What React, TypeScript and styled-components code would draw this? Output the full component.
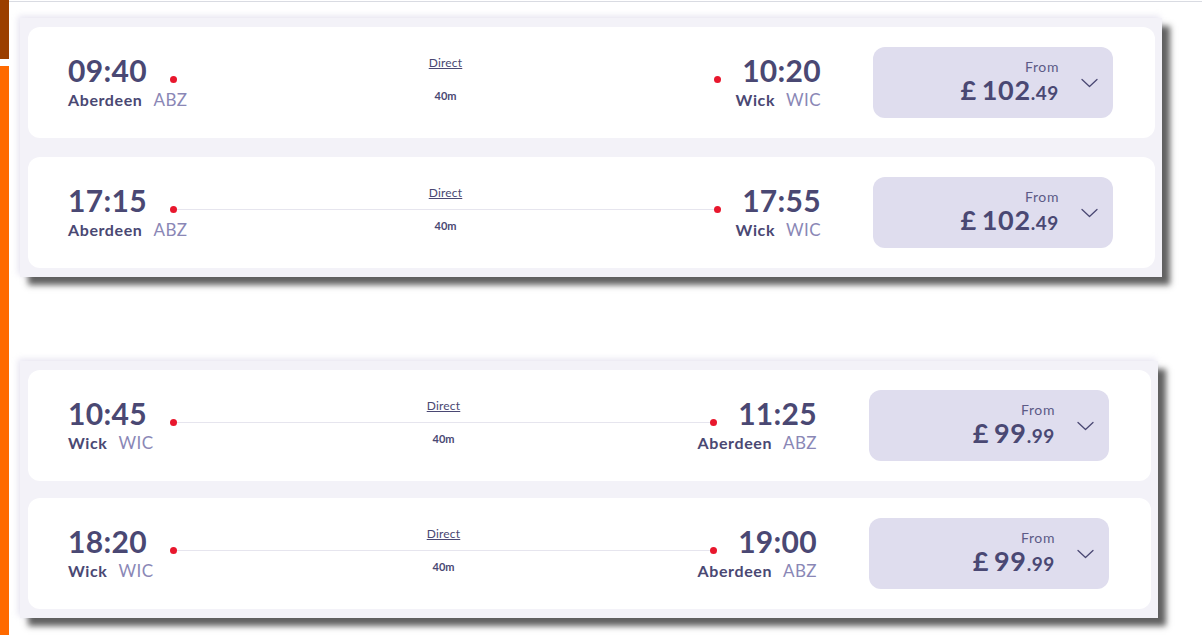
import React from 'react';
import styled, { createGlobalStyle } from 'styled-components';

type Journey = {
    depTime: string
    depName: string
    depCode: string
    arrTime: string
    arrName: string
    arrCode: string
    duration: string
    pounds: string
    pence: string
    showLine: boolean
}

const GlobalStyle = createGlobalStyle`
    html, body {
        margin: 0;
        padding: 0;
        background: #ffffff;
        font-family: Lato, "Open Sans", Arial, sans-serif;
        color: #4a4873;
    }
`;

const Page = styled.div`
    display: flex;
    width: 1202px;
    height: 635px;
    overflow: hidden;
`;

const SideBar = styled.div`
    width: 9px;
    display: flex;
    flex-direction: column;
    flex-shrink: 0;
`;

const SideTop = styled.div`
    height: 59px;
    background: #9b3f00;
`;

const SideGap = styled.div`
    height: 7px;
    background: #ffffff;
`;

const SideBottom = styled.div`
    flex: 1;
    background: #ff6a00;
`;

const Main = styled.div`
    flex: 1;
    margin-top: 1px;
    border-top: 1px solid #d9dbe2;
    padding: 16px 0 0 11px;
    display: flex;
    flex-direction: column;
    gap: 84px;
`;

const Panel = styled.div<{ $width: number, $gap: number }>`
    width: ${p => p.$width}px;
    box-sizing: border-box;
    padding: 9px 7px 9px 8px;
    background: #f3f2f8;
    display: flex;
    flex-direction: column;
    gap: ${p => p.$gap}px;
    box-shadow: 8px 8px 6px rgba(30, 30, 30, 0.7), -2px -2px 6px rgba(225, 223, 238, 0.8);
`;

const Card = styled.div`
    height: 111px;
    box-sizing: border-box;
    background: #ffffff;
    border-radius: 12px;
    padding: 0 42px 0 40px;
    display: grid;
    grid-template-columns: 102px 1fr 100px 292px;
    align-items: center;
`;

const Stop = styled.div<{ $align: 'left' | 'right' }>`
    display: flex;
    flex-direction: column;
    align-items: ${p => p.$align === 'left' ? 'flex-start' : 'flex-end'};
    white-space: nowrap;
    margin-bottom: 3px;
`;

const Time = styled.div`
    font-size: 30px;
    line-height: 34px;
    font-weight: 700;
    color: #4a4873;
    letter-spacing: 0.3px;
`;

const Station = styled.div`
    margin-top: 3px;
    font-size: 16px;
    line-height: 20px;
    display: flex;
    gap: 11px;
`;

const StationName = styled.span`
    font-weight: 700;
    letter-spacing: 0.6px;
    color: #4a4873;
`;

const StationCode = styled.span`
    font-size: 17px;
    color: #8a87b6;
    letter-spacing: 0.4px;
`;

const Timeline = styled.div`
    display: flex;
    flex-direction: column;
    align-items: center;
    margin-bottom: 7px;
`;

const DirectLink = styled.a`
    font-size: 12px;
    line-height: 16px;
    color: #4a4873;
    text-decoration: underline;
    letter-spacing: 0.2px;
`;

const Track = styled.div`
    align-self: stretch;
    height: 7px;
    margin: 5px 0;
    display: flex;
    align-items: center;
`;

const Dot = styled.span`
    width: 7px;
    height: 7px;
    border-radius: 50%;
    background: #e8172d;
    flex-shrink: 0;
`;

const Line = styled.span<{ $visible: boolean }>`
    flex: 1;
    height: 1px;
    background: ${p => p.$visible ? '#e6e5ee' : 'transparent'};
`;

const Duration = styled.div`
    font-size: 11px;
    line-height: 16px;
    font-weight: 700;
    color: #4a4873;
`;

const PriceBox = styled.button`
    justify-self: end;
    width: 240px;
    height: 71px;
    border: none;
    border-radius: 12px;
    background: #dfddee;
    display: flex;
    align-items: center;
    justify-content: flex-end;
    gap: 22px;
    padding: 0 15px 0 0;
    font-family: inherit;
    cursor: pointer;
`;

const PriceText = styled.div`
    display: flex;
    flex-direction: column;
    align-items: flex-end;
    margin-top: 2px;
`;

const FromLabel = styled.span`
    font-size: 14px;
    line-height: 16px;
    color: #5c5a86;
    letter-spacing: 0.6px;
`;

const Amount = styled.span`
    font-size: 27px;
    line-height: 30px;
    font-weight: 700;
    color: #4a4873;
    letter-spacing: 0.6px;
`;

const Currency = styled.span`
    margin-right: 5px;
`;

const Pence = styled.span`
    font-size: 19px;
`;

const Chevron = () => (
    <svg width="17" height="10" viewBox="0 0 17 10" fill="none">
        <path d="M1 1.5 L8.5 8.5 L16 1.5" stroke="#4a4873" strokeWidth="1.3" strokeLinecap="round" strokeLinejoin="round" />
    </svg>
);

const outbound: Journey[] = [
    { depTime: "09:40", depName: "Aberdeen", depCode: "ABZ", arrTime: "10:20", arrName: "Wick", arrCode: "WIC", duration: "40m", pounds: "102", pence: ".49", showLine: false },
    { depTime: "17:15", depName: "Aberdeen", depCode: "ABZ", arrTime: "17:55", arrName: "Wick", arrCode: "WIC", duration: "40m", pounds: "102", pence: ".49", showLine: true },
];

const inbound: Journey[] = [
    { depTime: "10:45", depName: "Wick", depCode: "WIC", arrTime: "11:25", arrName: "Aberdeen", arrCode: "ABZ", duration: "40m", pounds: "99", pence: ".99", showLine: true },
    { depTime: "18:20", depName: "Wick", depCode: "WIC", arrTime: "19:00", arrName: "Aberdeen", arrCode: "ABZ", duration: "40m", pounds: "99", pence: ".99", showLine: true },
];

const JourneyCard: React.FC<{ journey: Journey }> = ({ journey }) => (
    <Card>
        <Stop $align="left">
            <Time>{journey.depTime}</Time>
            <Station>
                <StationName>{journey.depName}</StationName>
                <StationCode>{journey.depCode}</StationCode>
            </Station>
        </Stop>
        <Timeline>
            <DirectLink>Direct</DirectLink>
            <Track>
                <Dot />
                <Line $visible={journey.showLine} />
                <Dot />
            </Track>
            <Duration>{journey.duration}</Duration>
        </Timeline>
        <Stop $align="right">
            <Time>{journey.arrTime}</Time>
            <Station>
                <StationName>{journey.arrName}</StationName>
                <StationCode>{journey.arrCode}</StationCode>
            </Station>
        </Stop>
        <PriceBox>
            <PriceText>
                <FromLabel>From</FromLabel>
                <Amount>
                    <Currency>£</Currency>{journey.pounds}<Pence>{journey.pence}</Pence>
                </Amount>
            </PriceText>
            <Chevron />
        </PriceBox>
    </Card>
);

const App: React.FC = () => (
    <>
        <GlobalStyle />
        <Page>
            <SideBar>
                <SideTop />
                <SideGap />
                <SideBottom />
            </SideBar>
            <Main>
                <Panel $width={1142} $gap={19}>
                    {outbound.map(j => <JourneyCard key={j.depTime} journey={j} />)}
                </Panel>
                <Panel $width={1138} $gap={17}>
                    {inbound.map(j => <JourneyCard key={j.depTime} journey={j} />)}
                </Panel>
            </Main>
        </Page>
    </>
);

export default App;
